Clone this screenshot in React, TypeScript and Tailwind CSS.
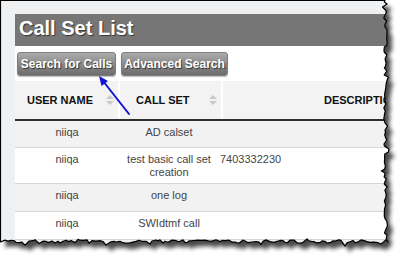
import React from "react";

// deterministic jitter for the torn edge
const rand = (() => {
  let s = 9;
  return () => {
    s = (s * 16807) % 2147483647;
    return s / 2147483647;
  };
})();

const buildEdge = () => {
  const pts: string[] = ["M0.5 0.5", "L385 0.5"];
  for (let y = 2; y < 241; y += 2 + Math.floor(rand() * 3)) {
    const spike = rand() < 0.2 ? (rand() - 0.5) * 7 : 0;
    pts.push(`L${(385.5 + (rand() - 0.5) * 3.5 + spike).toFixed(1)} ${y}`);
  }
  pts.push("L388 242");
  for (let x = 386; x > 2; x -= 2 + Math.floor(rand() * 3)) {
    const spike = rand() < 0.2 ? (rand() - 0.5) * 7 : 0;
    pts.push(`L${x} ${(241.5 + (rand() - 0.5) * 3.5 + spike).toFixed(1)}`);
  }
  pts.push("L0.5 242 Z");
  return pts.join(" ");
};

const edge = buildEdge();
const outside = `M0 0 H407 V265 H0 Z ${edge}`;

const SortIcon = () => (
  <svg width="8" height="10" viewBox="0 0 8 10" className="shrink-0">
    <polygon points="4,0 8,4 0,4" fill="#c9c9c9" />
    <polygon points="0,6 8,6 4,10" fill="#c9c9c9" />
  </svg>
);

const Button = ({ children, width }: { children: React.ReactNode; width: string }) => (
  <button
    className={`${width} h-[24px] rounded-[3px] border border-[#7e7e7e] bg-linear-to-b from-[#ababab] to-[#6d6d6d] text-[12px] font-bold leading-[14px] text-white shadow-[0_1px_1px_rgba(0,0,0,0.25)] [text-shadow:1px_1px_1px_rgba(0,0,0,0.6)]`}
  >
    {children}
  </button>
);

const rows = [
  { user: "niiqa", set: ["AD calset"], desc: "", h: "h-[27px]", bg: "bg-[#f2f2f2]" },
  { user: "niiqa", set: ["test basic call set", "creation"], desc: "7403332230", h: "h-[36px]", bg: "bg-white" },
  { user: "niiqa", set: ["one log"], desc: "", h: "h-[28px]", bg: "bg-[#f2f2f2]" },
  { user: "niiqa", set: ["SWIdtmf call"], desc: "", h: "h-[28px]", bg: "bg-white" },
];

export default function App() {
  return (
    <div className="relative h-[265px] w-[407px] overflow-hidden bg-white font-['Liberation_Sans',Arial,sans-serif]">
      <div className="h-[246px] w-[392px] overflow-hidden bg-[#eff0f2] pl-[15px] pt-[14px]">
        <div className="w-[420px] bg-white">
          {/* Title */}
          <div className="h-[32px] bg-[#767676] pl-[4px] pt-[3px] text-[20px] font-bold leading-[23px] text-white [text-shadow:1px_1px_1px_rgba(0,0,0,0.55)]">
            Call Set List
          </div>

          {/* Buttons */}
          <div className="flex h-[35px] gap-[5px] pl-[2px] pt-[6px]">
            <Button width="w-[99px]">Search for Calls</Button>
            <Button width="w-[107px]">Advanced Search</Button>
          </div>

          {/* Table header */}
          <div className="flex h-[40px] gap-[2px] border-b-2 border-[#2e2e2e] text-[11px] font-bold text-[#111]">
            <div className="flex w-[103px] items-center bg-[#f3f3f3] pl-[12px] pr-[4px]">
              <span>USER NAME</span>
              <span className="ml-auto"><SortIcon /></span>
            </div>
            <div className="flex w-[101px] items-center bg-[#f3f3f3] pl-[16px] pr-[4px]">
              <span>CALL SET</span>
              <span className="ml-auto"><SortIcon /></span>
            </div>
            <div className="flex flex-1 items-center bg-[#f3f3f3] pl-[101px]">
              <span>DESCRIPTION</span>
            </div>
          </div>

          {/* Rows */}
          {rows.map((r, i) => (
            <div key={i} className={`flex ${r.h} ${r.bg} border-b border-[#d6d6d6] pt-[5px] text-[11px] leading-[13px] text-[#444]`}>
              <div className="w-[104px] text-center">{r.user}</div>
              <div className="w-[100px] text-center">
                {r.set.map((l) => (
                  <div key={l}>{l}</div>
                ))}
              </div>
              <div className="flex-1 pl-[1px]">{r.desc}</div>
            </div>
          ))}
        </div>
      </div>

      {/* torn edge, shadow and annotation arrow */}
      <svg className="pointer-events-none absolute inset-0" width="407" height="265" viewBox="0 0 407 265">
        <defs>
          <clipPath id="outside">
            <path d={outside} clipRule="evenodd" />
          </clipPath>
          <filter id="blur" x="-10%" y="-10%" width="120%" height="120%">
            <feGaussianBlur stdDeviation="2.2" />
          </filter>
        </defs>
        <path d={outside} fill="#fff" fillRule="evenodd" />
        <g clipPath="url(#outside)">
          <path d={edge} transform="translate(5 6)" fill="#2a2a2a" opacity="0.85" filter="url(#blur)" />
        </g>
        <path d={edge} fill="none" stroke="#000" strokeWidth="1.2" strokeLinejoin="round" />

        <line x1="129" y1="114" x2="103" y2="81" stroke="#1212d8" strokeWidth="2" strokeLinecap="round" />
        <polygon points="99,76 108,81 101.5,86" fill="#1212d8" />
      </svg>
    </div>
  );
}
